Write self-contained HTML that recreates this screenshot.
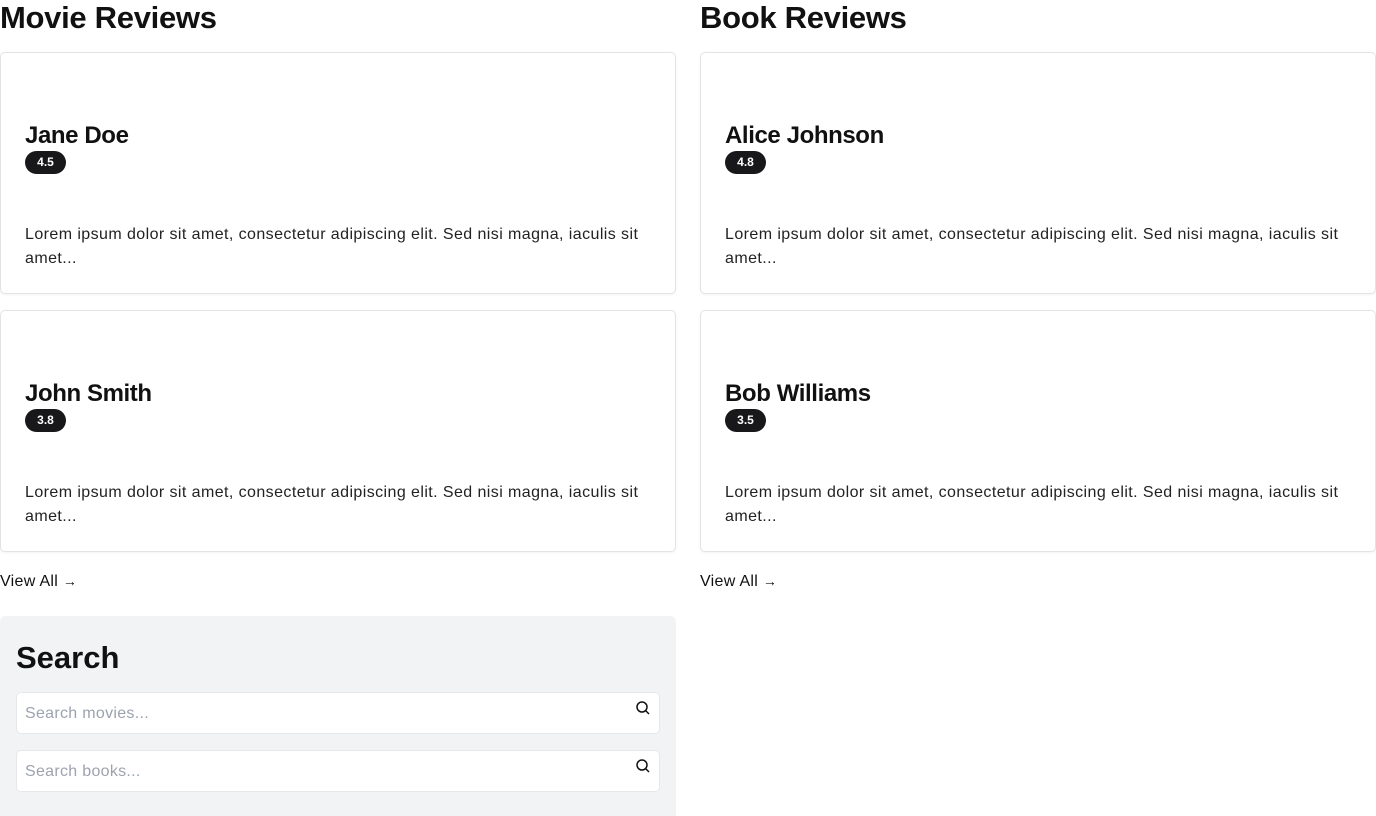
<!DOCTYPE html>
<html><head><style>
*{box-sizing:border-box;margin:0;padding:0}
html,body{width:1376px;height:816px;overflow:hidden}
body{background:#fff;font-family:"Liberation Sans",sans-serif;color:#111;position:relative}
.h{position:absolute;top:0;font-size:31px;font-weight:bold;line-height:36px;letter-spacing:-0.3px}
.card{position:absolute;width:676px;height:242px;border:1px solid #e3e3e3;border-radius:5px;box-shadow:0 1px 2px rgba(0,0,0,.05)}
.name{position:absolute;left:24px;top:68px;font-size:24px;font-weight:bold;line-height:30px;letter-spacing:-0.4px}
.badge{position:absolute;left:24px;top:98px;height:23px;width:41px;border-radius:12px;background:#18181b;color:#fff;font-size:12px;font-weight:bold;text-align:center;line-height:23px}
.p{position:absolute;left:24px;top:170px;width:640px;font-size:16px;line-height:24px;color:#222;letter-spacing:0.42px}
.va{position:absolute;top:570px;font-size:16px;line-height:22px;letter-spacing:0.3px}
.search{position:absolute;left:0;top:616px;width:676px;height:200px;background:#f2f3f5;border-radius:6px 6px 0 0}
.inp{position:absolute;left:16px;width:644px;height:42px;background:#fff;border:1px solid #e5e7eb;border-radius:5px;font-size:16px;color:#9ca3af;padding-left:8px;line-height:42px;letter-spacing:0.3px}
.inp svg{position:absolute;right:8px;top:7px}
</style></head><body>
<div class="h" style="left:0">Movie Reviews</div>
<div class="h" style="left:700px">Book Reviews</div>

<div class="card" style="left:0;top:52px"><div class="name">Jane Doe</div><div class="badge">4.5</div><div class="p">Lorem ipsum dolor sit amet, consectetur adipiscing elit. Sed nisi magna, iaculis sit amet...</div></div>
<div class="card" style="left:0;top:310px"><div class="name">John Smith</div><div class="badge">3.8</div><div class="p">Lorem ipsum dolor sit amet, consectetur adipiscing elit. Sed nisi magna, iaculis sit amet...</div></div>
<div class="card" style="left:700px;top:52px"><div class="name">Alice Johnson</div><div class="badge">4.8</div><div class="p">Lorem ipsum dolor sit amet, consectetur adipiscing elit. Sed nisi magna, iaculis sit amet...</div></div>
<div class="card" style="left:700px;top:310px"><div class="name">Bob Williams</div><div class="badge">3.5</div><div class="p">Lorem ipsum dolor sit amet, consectetur adipiscing elit. Sed nisi magna, iaculis sit amet...</div></div>

<div class="va" style="left:0">View All <span style="font-weight:bold;font-size:14px">&#8594;</span></div>
<div class="va" style="left:700px">View All <span style="font-weight:bold;font-size:14px">&#8594;</span></div>

<div class="search">
<div style="position:absolute;left:16px;top:24px;font-size:31px;font-weight:bold;line-height:36px">Search</div>
<div class="inp" style="top:76px">Search movies...<svg width="16" height="16" viewBox="0 0 16 16" fill="none" stroke="#111" stroke-width="1.5"><circle cx="7" cy="7" r="5"/><path d="M10.5 10.5L14 14"/></svg></div>
<div class="inp" style="top:134px">Search books...<svg width="16" height="16" viewBox="0 0 16 16" fill="none" stroke="#111" stroke-width="1.5"><circle cx="7" cy="7" r="5"/><path d="M10.5 10.5L14 14"/></svg></div>
</div>
</body></html>
